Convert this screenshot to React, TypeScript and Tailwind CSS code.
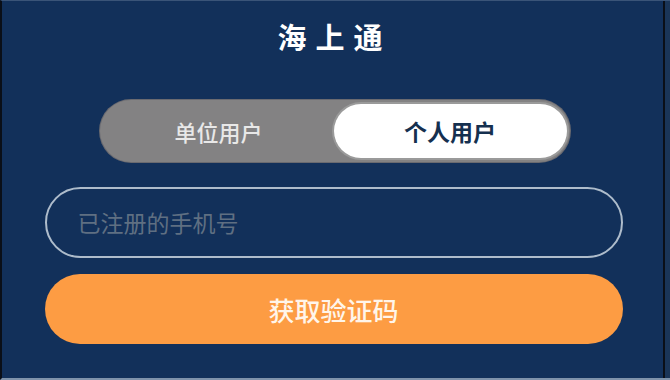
import React from "react";

export default function App() {
  const font = { fontFamily: '"Noto Sans CJK SC", "Noto Sans", sans-serif' };
  return (
    <div
      className="w-[670px] h-[380px] flex bg-[#12305a] border-l-[2px] border-[#0a0f18] border-t border-t-[#3a5478] border-b-[2px] border-b-[#7f93ab] overflow-hidden"
      style={font}
    >
      <div className="flex-1 flex flex-col items-center">
        <div className="mt-[19px] text-[29px] leading-[32px] font-bold text-white tracking-[9px] pl-[4px]">
          海上通
        </div>
        <div className="mt-[48px] ml-[4px] w-[470px] h-[62px] rounded-full bg-[#838283] flex items-center p-[4px] pr-[3px] shadow-[0_0_0_1px_#6a6a70]">
          <div className="flex-1 text-center text-[22px] text-[#e8e8e8] font-medium">
            单位用户
          </div>
          <div className="w-[233px] h-[54px] rounded-full bg-white flex items-center justify-center text-[23px] font-bold text-[#15304f] shadow-[0_0_0_2px_#9a9a9a]">
            个人用户
          </div>
        </div>
        <div className="mt-[25px] ml-[2px] w-[578px] h-[71px] rounded-full border-2 border-[#aebccb] flex items-center pl-[31px] text-[23px] text-[#5f6f82]">
          已注册的手机号
        </div>
        <div className="mt-[16px] ml-[2px] w-[578px] h-[70px] rounded-full bg-[#fd9c43] flex items-center justify-center text-[26px] font-medium text-[#fff5ea]">
          获取验证码
        </div>
      </div>
      <div className="w-[2px] bg-[#0a0f18]" />
      <div className="w-[5px] bg-[#1a3558]" />
    </div>
  );
}
